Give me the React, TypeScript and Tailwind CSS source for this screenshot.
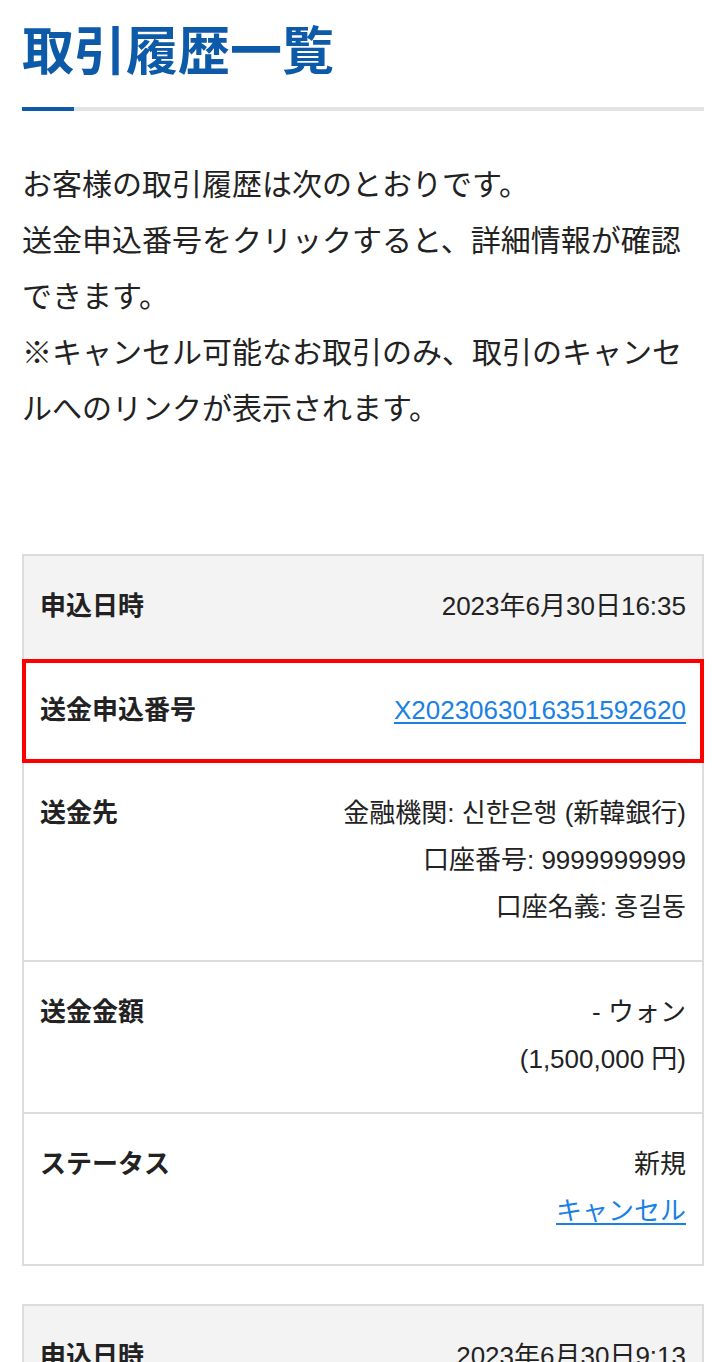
const font = { fontFamily: '"Liberation Sans", "Noto Sans CJK JP", sans-serif' };

type Row = {
  label: string;
  values: React.ReactNode[];
  shaded?: boolean;
  highlight?: boolean;
};

const rows: Row[] = [
  { label: '申込日時', values: ['2023年6月30日16:35'], shaded: true },
  {
    label: '送金申込番号',
    values: [
      <a key="no" href="#" className="text-[#1a7fe6] underline underline-offset-[3px]">
        X2023063016351592620
      </a>,
    ],
    highlight: true,
  },
  {
    label: '送金先',
    values: ['金融機関: 신한은행 (新韓銀行)', '口座番号: 9999999999', '口座名義: 홍길동'],
  },
  { label: '送金金額', values: ['- ウォン', '(1,500,000 円)'] },
  {
    label: 'ステータス',
    values: [
      '新規',
      <a key="c" href="#" className="text-[#1a7fe6] underline underline-offset-[3px]">
        キャンセル
      </a>,
    ],
  },
];

const HistoryRow = ({ row, first }: { row: Row; first: boolean }) => (
  <div
    className={`flex justify-between gap-4 text-[26px] leading-[47px] text-[#222] ${
      first ? '' : '-mt-[2px]'
    } ${
      row.highlight
        ? 'relative z-10 border-[4px] border-[#ff0000] pt-[24px] pb-[25px] px-[14px]'
        : 'border-2 border-[#dcdcdc] pt-[27px] pb-[29px] px-[16px]'
    } ${row.shaded ? 'bg-[#f3f3f3]' : 'bg-white'}`}
  >
    <div className="shrink-0 font-bold">{row.label}</div>
    <div className="flex flex-col items-end text-right">
      {row.values.map((v, i) => (
        <div key={i}>{v}</div>
      ))}
    </div>
  </div>
);

const App = () => {
  return (
    <div className="min-h-screen bg-white px-[22px]" style={font}>
      {/* Title */}
      <h1 className="pt-[26px] text-[52px] font-bold leading-[52px] text-[#0d5aa9]">取引履歴一覧</h1>
      <div className="mt-[29px] flex">
        <div className="h-[4px] w-[52px] bg-[#0d5aa9]" />
        <div className="h-[4px] flex-1 bg-[#e3e3e3]" />
      </div>

      {/* Intro */}
      <p className="mt-[46px] text-[30px] leading-[56px] text-[#222]">
        お客様の取引履歴は次のとおりです。
        <br />
        送金申込番号をクリックすると、詳細情報が確認できます。
        <br />
        ※キャンセル可能なお取引のみ、取引のキャンセルへのリンクが表示されます。
      </p>

      {/* History table 1 */}
      <div className="mt-[117px]">
        {rows.map((row, i) => (
          <HistoryRow key={i} row={row} first={i === 0} />
        ))}
      </div>

      {/* History table 2 */}
      <div className="mt-[38px]">
        <HistoryRow row={{ label: '申込日時', values: ['2023年6月30日9:13'], shaded: true }} first />
      </div>
    </div>
  );
};

export default App;
